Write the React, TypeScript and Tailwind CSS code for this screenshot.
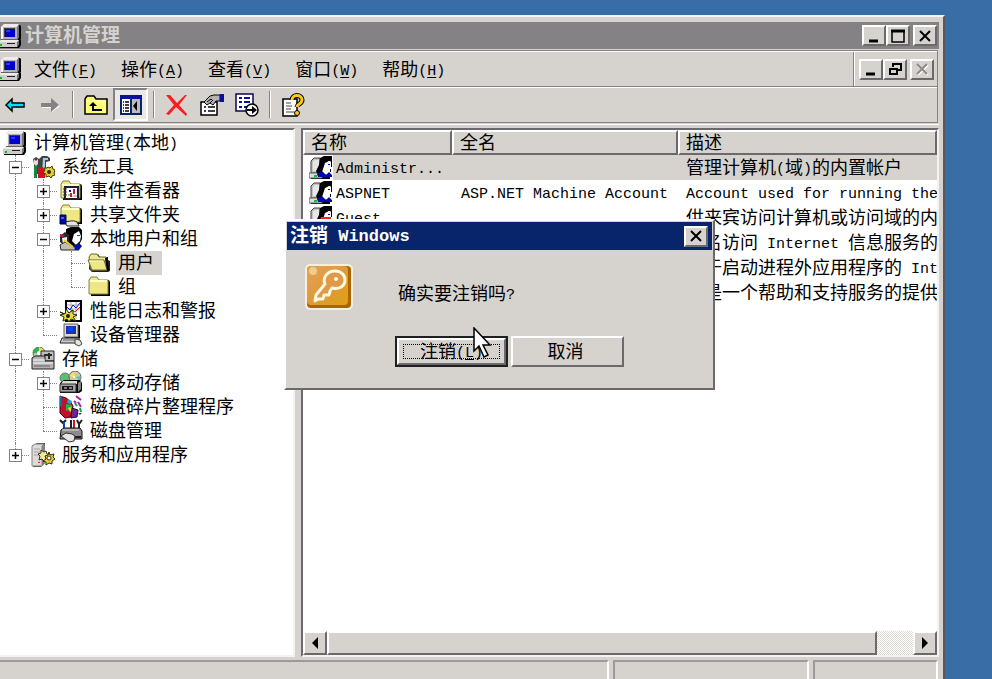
import type { ReactNode } from "react";
import clsx from "clsx";

const raised =
  "bg-[#d6d3ce] border-2 border-t-white border-l-white border-r-[#6b696b] border-b-[#6b696b]";
const sunken =
  "border-2 border-t-[#6b696b] border-l-[#6b696b] border-r-[#f4f3f1] border-b-[#f4f3f1]";

// Chinese glyphs are twice as wide as the Latin ones, so Latin runs get a smaller size
function Mixed({ text, latin = "text-[15px]" }: { text: string; latin?: string }) {
  return (
    <>
      {text.split(/([\x20-\x7e]+)/).map((part, i) =>
        i % 2 ? (
          <span key={i} className={clsx("whitespace-pre align-[1px] leading-none", latin)}>
            {part}
          </span>
        ) : (
          part
        )
      )}
    </>
  );
}

function AccessKey({ label, letter }: { label: string; letter: string }) {
  return (
    <>
      {label}
      <span className="align-[1px] text-[15px] leading-none">
        (<u className="underline-offset-2">{letter}</u>)
      </span>
    </>
  );
}

function Icon({ children, className = "size-6" }: { children: ReactNode; className?: string }) {
  return (
    <svg viewBox="0 0 24 24" className={clsx("shrink-0", className)} aria-hidden="true">
      {children}
    </svg>
  );
}

function Computer({ className }: { className?: string }) {
  return (
    <Icon className={className}>
      <path d="M5 1h17l1 1v13l-2 3H5z" fill="#000" />
      <path d="M3 3l3-3h15v13l-2 3H3z" fill="#b5b2b5" />
      <path d="M3 3l3-3h15l-2 3z" fill="#efebe7" />
      <path d="M3 3h2v12H3z" fill="#f7f7f7" />
      <path d="M19 3l2-3v13l-2 3z" fill="#737173" />
      <path d="M6 4h11v9H6z" fill="#424142" />
      <path d="M7 5h10v8H7z" fill="#0000ce" />
      <path d="M8 6h4v2H8z" fill="#2139ff" />
      <path d="M3 15h16v1H3z" fill="#636163" />
      <path d="M1 18l3-2h19v5l-2 3H1z" fill="#000" />
      <path d="M0 18l3-2h18v4l-2 3H0z" fill="#cecbce" />
      <path d="M0 18l3-2h18l-2 2z" fill="#efebe7" />
      <path d="M19 18l2-2v4l-2 3z" fill="#737173" />
      <path d="M2 20h2v2H2z" fill="#00c300" />
      <path d="M9 19h8v1H9z" fill="#212021" />
    </Icon>
  );
}

function Folder({ open, children }: { open?: boolean; children?: ReactNode }) {
  return (
    <Icon>
      {open ? (
        <>
          <path d="M3 5l2-2h6l2 3h8v3l2 1v10l-2 1H5l-3-3z" fill="#212021" />
          <path d="M2 6l2-3h6l2 3h7v13H4z" fill="#efe794" stroke="#6b6931" />
          <path d="M1 9h16l3 10H5z" fill="#efe784" stroke="#6b6931" />
          <path d="M2 10h14" stroke="#ffffce" />
          <path d="M19 7l2 12" stroke="#000" strokeWidth="2" />
        </>
      ) : (
        <>
          <path d="M3 5h19l1 2v14H4z" fill="#000" />
          <path d="M2 5l2-3h6l2 3h9v14H2z" fill="#efe784" stroke="#848242" />
          <path d="M3 6h17" stroke="#ffffce" strokeWidth="2" />
        </>
      )}
      {children}
    </Icon>
  );
}

function UserIcon({ guest }: { guest?: boolean }) {
  return (
    <Icon>
      <path d="M2 5l3-3h6v15H2z" fill="#c6c3c6" stroke="#424142" />
      <path d="M4 6l2-2h4v11H4z" fill="#e7e7e7" />
      <path d="M1 18h20v5H2z" fill="#000" />
      <path d="M0 17h13v5H0z" fill="#dedbde" stroke="#636163" />
      <path d="M5 19h3v2H5z" fill="#00c339" />
      <path d="M11 2l4-2h8v6l-3-1-3 3-2 7-6 4-2-4 3-6z" fill="#000" />
      <path d="M16 7l4-2 2 1v4l1 2-2 1v3l-4 3-4-3z" fill="#fff" />
      <path d="M22 5h1v6h-1zM21 13h1v3h-1z" fill="#000" />
      <path d="M19 8h2v1h-2z" fill="#0000ff" />
      <path d="M8 18l5-3 4 4 3-3 3 3v2H9z" fill="#0008ad" />
      {guest && <path d="M12 11h10v3H11z" fill="#ff2021" />}
    </Icon>
  );
}

function SystemToolsIcon() {
  return (
    <Icon>
      <path d="M2 4l3-2 3 2 3-3h5l3 2v3l-4 1v6l-4 6H3V9z" fill="#424142" />
      <path d="M3 4l2 2 2-2v5l-2 2-2-2z" fill="#dedfde" />
      <path d="M12 3h5v2h-3v12h-3z" fill="#a5cbde" />
      <path d="M3 11h3v12H3z" fill="#108a42" />
      <path d="M7 12h5l2 4v7H7z" fill="#ce1029" />
      <path d="M17 12l2 1 2-2 1 3 2 1-1 3 1 2-3 1-1 2-2-2-3 1v-3l-3-1 2-3-1-2h3z" fill="#e7cb31" stroke="#423900" />
      <circle cx="18" cy="17" r="2" fill="#313010" />
    </Icon>
  );
}

function EventViewerIcon() {
  return (
    <Folder>
      <path d="M6 8h13v12H6z" fill="#fff" stroke="#212021" strokeWidth="2" />
      <path d="M4 10h4M4 13h4M4 16h4" stroke="#424142" />
      <path d="M10 11h2v2h-2z" fill="#0000ff" />
      <path d="M15 10v5M12 14v4" stroke="#e71021" strokeWidth="2" />
      <path d="M9 16h2M14 17h4" stroke="#848284" />
    </Folder>
  );
}

function SharedFolderIcon() {
  return (
    <Folder>
      <path d="M5 18c3 2 8-2 13 1l2 4H8z" fill="#e7e3de" stroke="#212021" />
      <path d="M1 12h6v9H1z" fill="#0008a5" stroke="#000842" />
      <path d="M2 14h3v2H2z" fill="#2965ff" />
    </Folder>
  );
}

function LocalUsersIcon() {
  return (
    <Icon>
      <path d="M7 2l5-2h8l3 3v9l-3 6-7 3-6-7z" fill="#000" />
      <path d="M15 7l5-3 2 5-1 5-4 4-4-4z" fill="#fff" />
      <path d="M18 8h3v1h-3z" fill="#0059a5" />
      <path d="M1 9l5-4 4 3v8l-4 3-5-4z" fill="#292829" />
      <path d="M3 11l5-1v6l-4 1z" fill="#f7f3ef" />
      <path d="M1 7l5 1-2 2H1z" fill="#ad184a" />
      <path d="M1 18l5-3 8 5 3-2 3 5H2z" fill="#c6bead" stroke="#292829" />
      <path d="M5 13l9 7" stroke="#e7cb31" strokeWidth="2" />
      <path d="M15 19l5-3 3 3-3 4h-4z" fill="#0010a5" />
    </Icon>
  );
}

function PerformanceIcon() {
  return (
    <Icon>
      <path d="M7 2h15v20H7z" fill="#fff" stroke="#000" strokeWidth="2" />
      <path d="M8 6h13M8 10h13M12 3v17M17 3v17" stroke="#adaead" />
      <path d="M8 8l3 3 3-5 3 3 4-5" fill="none" stroke="#0010ce" />
      <path d="M9 15l4-4 3 2 5-5" fill="none" stroke="#de1021" />
      <path
        d="M1 13l5 2 1-5 3 4 4-3v4l4 1-4 2 3 4-5-2-2 3-2-3-4 2 1-4-4-2 4-1z"
        fill="#e7db42"
        stroke="#292800"
      />
      <circle cx="9" cy="17" r="2" fill="#212010" />
    </Icon>
  );
}

function DeviceManagerIcon() {
  return (
    <Icon>
      <path d="M6 2h15v13H6z" fill="#000" />
      <path d="M5 1h14v13H5z" fill="#ded7ce" stroke="#636163" />
      <path d="M7 3h10v8H7z" fill="#2130a5" />
      <path d="M9 4h5v4H9z" fill="#0049ff" />
      <path d="M3 15h17l1 5H1z" fill="#ceced6" stroke="#212021" />
      <path d="M4 17h13" stroke="#636163" />
      <path d="M16 16l5 1 2 4-3 2-4-2z" fill="#e7e3de" stroke="#424142" />
    </Icon>
  );
}

function StorageIcon() {
  return (
    <Icon>
      <circle cx="8" cy="6" r="6" fill="#bdcb9c" stroke="#636163" />
      <path d="M8 0v6H2a6 6 0 0 1 6-6z" fill="#29b352" />
      <path d="M8 6V0l5 3z" fill="#f7db4a" />
      <circle cx="8" cy="6" r="2" fill="#fff" />
      <path d="M10 4h13v10H10z" fill="#bdbebd" stroke="#292829" />
      <path d="M13 8h8M18 6v6" stroke="#292829" strokeWidth="2" />
      <path d="M1 11l3-2h10v5h9v8H1z" fill="#b5b2b5" stroke="#212021" />
      <path d="M2 13h12M2 16h20" stroke="#fff" />
      <path d="M3 19h16" stroke="#636163" />
    </Icon>
  );
}

function RemovableStorageIcon() {
  return (
    <Icon>
      <circle cx="6" cy="7" r="5" fill="#5abe73" stroke="#737573" />
      <circle cx="16" cy="6" r="6" fill="#cecb9c" stroke="#636163" />
      <path d="M10 5l5-4 1 5z" fill="#f7e75a" />
      <path d="M17 6l5-1-2 5z" fill="#5abece" />
      <circle cx="15" cy="6" r="1" fill="#fff" />
      <path d="M5 9h16l2 3v8l-3 2H1V12z" fill="#000" />
      <path d="M4 10h14v3H2z" fill="#dedbde" />
      <path d="M1 13h16v8H1z" fill="#a5a2a5" stroke="#313031" />
      <path d="M19 12l3-2v8l-3 3z" fill="#848284" />
      <path d="M3 15h11v4H3z" fill="#181818" />
      <path d="M5 17h3M10 17h3" stroke="#e7e7e7" />
    </Icon>
  );
}

function DefragIcon() {
  return (
    <Icon>
      <path d="M1 1l6 2 4 3 3 5-2 11-6 1-5-5z" fill="#c6102a" stroke="#4a0010" />
      <path d="M2 1v10" stroke="#0071b5" strokeWidth="2" />
      <path d="M9 4l4 2-1 3-4-1z" fill="#21a2d6" />
      <path d="M7 9l6 1v5l-6 1z" fill="#21b24a" />
      <path d="M9 13l3-1 2 3-3 2z" fill="#f7d321" />
      <path d="M13 13l6 2-1 7-6 1z" fill="#6b2894" stroke="#210839" />
      <path d="M17 1l5 4M15 6l2 2M19 7l3 5" stroke="#9c28ad" strokeWidth="2" />
      <path d="M16 8l2 3M21 13l1 4" stroke="#10a24a" strokeWidth="2" />
      <path d="M19 18h4l-2 2z" fill="#424142" />
    </Icon>
  );
}

function DiskManagementIcon() {
  return (
    <Icon>
      <path d="M1 1l3 3 3-3M12 1v9M18 1l2 4 3-4M20 4v6" fill="none" stroke="#212021" strokeWidth="2" />
      <path d="M5 3v8" stroke="#104ab5" strokeWidth="2" />
      <path d="M15 1v9" stroke="#ce1021" strokeWidth="2" />
      <path d="M2 11l3-2h16l2 3v8H1z" fill="#8c8a8c" stroke="#101010" />
      <path d="M3 11h17" stroke="#dedbde" />
      <path d="M2 17l5-3 6 1 3 2-1 5-5 1z" fill="#e7e3de" stroke="#313031" />
      <path d="M16 17h6v2h-6z" fill="#212021" />
    </Icon>
  );
}

function ServicesIcon() {
  return (
    <Icon>
      <path d="M2 3l4-3h8v20l-4 4H2z" fill="#424142" />
      <path d="M1 3l3-2h9l-2 2v20H1z" fill="#dedbd6" stroke="#848284" />
      <path d="M11 3l3-2v19l-3 3z" fill="#848284" />
      <path d="M3 6h6M3 9h6M3 12h6" stroke="#a5a2a5" />
      <path d="M7 19h2v1H7z" fill="#f71021" />
      <path d="M10 7l3 2 2-1 1 3 3 1-2 2 1 3-3-1-2 3-2-3-3 1 1-4-2-2 3-1z" fill="#efe7a5" stroke="#313010" />
      <path d="M18 9l1 3 4-1-1 3 2 2-3 2v3l-3-1-3 2v-3l-3-1 3-2-1-3 3-1z" fill="#e7cb31" stroke="#313010" />
      <circle cx="18" cy="15" r="2" fill="#fff" stroke="#313010" />
    </Icon>
  );
}

// One guide character per level: "|" passes through, "t" and "l" are branch joints,
// "+" and "-" are expanders, "*" is the last closed expander of its level
const tree: { guides: string; label: string; icon: ReactNode; selected?: boolean }[] = [
  { guides: "", label: "计算机管理(本地)", icon: <Computer className="size-6" /> },
  { guides: "-", label: "系统工具", icon: <SystemToolsIcon /> },
  { guides: "|+", label: "事件查看器", icon: <EventViewerIcon /> },
  { guides: "|+", label: "共享文件夹", icon: <SharedFolderIcon /> },
  { guides: "|-", label: "本地用户和组", icon: <LocalUsersIcon /> },
  { guides: "||t", label: "用户", icon: <Folder open />, selected: true },
  { guides: "||l", label: "组", icon: <Folder /> },
  { guides: "|+", label: "性能日志和警报", icon: <PerformanceIcon /> },
  { guides: "|l", label: "设备管理器", icon: <DeviceManagerIcon /> },
  { guides: "-", label: "存储", icon: <StorageIcon /> },
  { guides: "|+", label: "可移动存储", icon: <RemovableStorageIcon /> },
  { guides: "|t", label: "磁盘碎片整理程序", icon: <DefragIcon /> },
  { guides: "|l", label: "磁盘管理", icon: <DiskManagementIcon /> },
  { guides: "*", label: "服务和应用程序", icon: <ServicesIcon /> },
];

const users = [
  { name: "Administr...", fullName: "", description: "管理计算机(域)的内置帐户", selected: true },
  { name: "ASPNET", fullName: "ASP.NET Machine Account", description: "Account used for running the" },
  { name: "Guest", fullName: "", description: "供来宾访问计算机或访问域的内", guest: true },
  { name: "", fullName: "", description: "匿名访问 Internet 信息服务的" },
  { name: "", fullName: "", description: "用于启动进程外应用程序的 Int" },
  { name: "", fullName: "", description: "这是一个帮助和支持服务的提供" },
];

const menus = [
  ["文件", "F"],
  ["操作", "A"],
  ["查看", "V"],
  ["窗口", "W"],
  ["帮助", "H"],
];

function Guide({ kind }: { kind: string }) {
  const last = kind === "l" || kind === "*";
  const box = kind === "+" || kind === "-" || kind === "*";
  return (
    <span className="relative flex h-6 w-7 shrink-0 items-center justify-center">
      <span
        className={clsx(
          "absolute left-[14px] top-0 border-l border-dotted border-[#848284]",
          last ? "h-3" : "h-6"
        )}
      />
      {kind !== "|" && (
        <span className="absolute left-[14px] right-0 top-3 border-t border-dotted border-[#848284]" />
      )}
      {box && (
        <button
          aria-label={kind === "-" ? "折叠" : "展开"}
          className="relative flex size-[13px] items-center justify-center border border-[#848284] bg-white"
        >
          <svg viewBox="0 0 9 9" className="size-[9px]" stroke="#000" strokeWidth="1.5">
            <path d={kind === "-" ? "M1 4.5h7" : "M1 4.5h7M4.5 1v7"} />
          </svg>
        </button>
      )}
    </span>
  );
}

function CaptionButton({ kind, disabled }: { kind: "min" | "max" | "restore" | "close"; disabled?: boolean }) {
  return (
    <button
      aria-label={kind}
      disabled={disabled}
      className={clsx("flex h-[21px] w-6 items-center justify-center", raised)}
    >
      <svg viewBox="0 0 16 16" className="size-4" fill="none" stroke="#000" strokeWidth="2">
        {kind === "min" && <path d="M3 13h9" strokeWidth="3" />}
        {kind === "max" && (
          <>
            <path d="M1 3h14" strokeWidth="3" />
            <path d="M2 3v11h12V3" strokeWidth="1.5" />
          </>
        )}
        {kind === "restore" && <path d="M6 3h8M6 2v4M14 2v7h-4M2 8h8M3 7v6h7V7" />}
        {kind === "close" && disabled && <path d="M4 4l10 10M14 4l-10 10" stroke="#fff" />}
        {kind === "close" && <path d="M3 3l10 10M13 3l-10 10" stroke={disabled ? "#8c8a8c" : "#000"} />}
      </svg>
    </button>
  );
}

function ToolButton({ label, active, children }: { label: string; active?: boolean; children: ReactNode }) {
  return (
    <button
      aria-label={label}
      className={clsx(
        "flex h-[33px] w-[35px] shrink-0 items-center justify-center",
        active && "border-2 border-t-[#848284] border-l-[#848284] border-r-white border-b-white bg-[#ebe9e6]"
      )}
    >
      {children}
    </button>
  );
}

function Separator() {
  return (
    <span className="flex w-[11px] shrink-0 justify-center">
      <span className="h-[27px] w-[2px] border-l border-r border-l-[#848284] border-r-white" />
    </span>
  );
}

function Toolbar() {
  return (
    <div className="-ml-[3px] flex items-center">
      <ToolButton label="后退">
        <Icon>
          <path d="M3 12l6-6v4h12v4H9v4z" fill="#00dff7" stroke="#000" strokeWidth="1.5" />
        </Icon>
      </ToolButton>
      <ToolButton label="前进">
        <Icon>
          <path d="M4 11h10V7l8 6-8 6v-4H4z" fill="#fff" />
          <path d="M3 10h10V5l8 7-8 7v-5H3z" fill="#848284" />
        </Icon>
      </ToolButton>
      <Separator />
      <ToolButton label="向上">
        <Icon>
          <path d="M1 6l2-3h7l2 3h11v15H1z" fill="#ffff73" stroke="#000" strokeWidth="1.5" />
          <path d="M2 8h20" stroke="#ffffd6" />
          <path d="M9 9l-4 4h3v5h10v-2h-8v-3h3z" fill="#000" />
        </Icon>
      </ToolButton>
      <ToolButton label="显示控制台树" active>
        <Icon>
          <path d="M2 3h20v18H2z" fill="#fff" stroke="#08246b" strokeWidth="2" />
          <path d="M1 2h22v4H1z" fill="#08109c" />
          <path d="M12 6h9v14h-9z" fill="#bdbabd" />
          <path d="M12 5v16" stroke="#08246b" strokeWidth="2" />
          <path d="M4 9h6M4 12h6M4 15h6M4 18h6" stroke="#000" strokeWidth="1.5" strokeDasharray="1 1 4" />
          <path d="M18 8v10l-4-5z" fill="#000" />
        </Icon>
      </ToolButton>
      <Separator />
      <ToolButton label="删除">
        <Icon>
          <path d="M1 2h4l7 8 8-8h2l-8 10 8 9-1 2-10-9-7 8-3-1 8-9z" fill="#ff1c21" />
        </Icon>
      </ToolButton>
      <ToolButton label="属性">
        <Icon>
          <path d="M1 9h16v13H1z" fill="#fff" stroke="#000" strokeWidth="1.5" />
          <path d="M4 14h2M8 14h7M4 18h2M8 18h7" stroke="#000" strokeWidth="1.5" />
          <path d="M4 9l6-6 4-1h6v6h-4l-3 4-3-2-3 2z" fill="#b5b2b5" stroke="#000" />
          <path d="M7 9l4-3 2 2M10 10l3-3" fill="none" stroke="#000" />
          <path d="M20 1h4v8h-4z" fill="#08109c" />
        </Icon>
      </ToolButton>
      <ToolButton label="导出列表">
        <Icon>
          <path d="M1 1h17v17H1z" fill="#fff" stroke="#08084a" strokeWidth="1.5" />
          <path d="M4 5h3M9 5h6M4 9h3M9 9h6M4 14h3M9 14h3" stroke="#08109c" strokeWidth="2" />
          <circle cx="17" cy="17" r="6" fill="#fff" stroke="#000" strokeWidth="1.5" />
          <path d="M12 16h5v-3l5 4-5 4v-3h-5z" fill="#000" />
        </Icon>
      </ToolButton>
      <Separator />
      <ToolButton label="帮助">
        <Icon>
          <path d="M2 6h14v17H2z" fill="#fff" stroke="#000" strokeWidth="1.5" />
          <path d="M5 10h5M5 13h6M5 16h5M5 19h8" stroke="#848284" strokeWidth="1.5" />
          <path d="M11 7c0-6 10-6 10 0 0 4-5 4-5 7" fill="none" stroke="#000" strokeWidth="5" />
          <path d="M11 7c0-6 10-6 10 0 0 4-5 4-5 7" fill="none" stroke="#ffcb10" strokeWidth="3" />
          <circle cx="16" cy="20" r="2.5" fill="#ffcb10" stroke="#000" />
        </Icon>
      </ToolButton>
    </div>
  );
}

function ConsoleTree() {
  return (
    <nav className={clsx("w-[295px] shrink-0 border-l-0 bg-white pt-px", sunken)}>
      {tree.map((node) => (
        <div key={node.label} className="flex h-6 items-center pl-px">
          {node.guides.split("").map((kind, i) => (
            <Guide key={i} kind={kind} />
          ))}
          <span className="flex w-[31px] shrink-0 pl-[2px]">{node.icon}</span>
          <span
            className={clsx(
              "flex h-6 items-center whitespace-nowrap pl-[2px] pr-2 pt-[2px]",
              node.selected && "bg-[#d6d3ce]"
            )}
          >
            <span>
              <Mixed text={node.label} />
            </span>
          </span>
        </div>
      ))}
    </nav>
  );
}

function UserList() {
  return (
    <section className={clsx("flex min-w-0 flex-1 flex-col bg-white", sunken)}>
      <div className="min-h-0 flex-1 overflow-hidden">
        <table className="w-full table-fixed border-collapse text-left">
          <colgroup>
            <col className="w-[149px]" />
            <col className="w-[226px]" />
            <col />
          </colgroup>
          <thead>
            <tr>
              {["名称", "全名", "描述"].map((title) => (
                <th key={title} className="p-0 font-normal">
                  <div className={clsx("flex h-[25px] items-center pl-[6px] pt-[2px]", raised)}>{title}</div>
                </th>
              ))}
            </tr>
          </thead>
          <tbody>
            {users.map((user) => {
              const fill = user.selected && "bg-[#d6d3ce]";
              return (
                <tr key={user.description} className="whitespace-nowrap">
                  <td className="p-0">
                    <div className="flex h-[25px] items-center pl-[6px]">
                      <UserIcon guest={user.guest} />
                      <span className={clsx("h-full flex-1 pl-[3px] pt-[2px]", fill)}>
                        <Mixed text={user.name} />
                      </span>
                    </div>
                  </td>
                  <td className={clsx("p-0", fill)}>
                    <div className="h-[25px] pl-[9px] pt-[2px]">
                      <Mixed text={user.fullName} />
                    </div>
                  </td>
                  <td className={clsx("overflow-hidden p-0", fill)}>
                    <div className="h-[25px] pl-2 pt-[2px]">
                      <Mixed text={user.description} />
                    </div>
                  </td>
                </tr>
              );
            })}
          </tbody>
        </table>
      </div>
      <div className="flex h-6 bg-[repeating-conic-gradient(#fff_0_25%,#dedbd6_0_50%)] bg-[length:2px_2px]">
        <button aria-label="向左滚动" className={clsx("flex w-6 items-center justify-center", raised)}>
          <svg viewBox="0 0 8 12" className="h-3 w-2">
            <path d="M7 0v12L1 6z" />
          </svg>
        </button>
        <div className={clsx("flex-1", raised)} />
        <div className="w-9" />
        <button aria-label="向右滚动" className={clsx("flex w-6 items-center justify-center", raised)}>
          <svg viewBox="0 0 8 12" className="h-3 w-2">
            <path d="M1 0v12l6-6z" />
          </svg>
        </button>
      </div>
    </section>
  );
}

function LogoffDialog() {
  return (
    <div
      role="dialog"
      aria-label="注销 Windows"
      className={clsx("absolute left-[284px] top-[219px] h-[171px] w-[431px] p-px", raised)}
    >
      <div className="flex h-7 items-center justify-between bg-[#08246b] pl-[3px] pr-1 text-[19px] font-bold text-white">
        <span className="pt-[2px]">
          <Mixed text="注销 Windows" latin="text-[17px]" />
        </span>
        <CaptionButton kind="close" />
      </div>
      <div className="flex items-center pl-[18px] pt-[13px]">
        <svg viewBox="0 0 48 48" className="size-12" aria-hidden="true">
          <defs>
            <linearGradient id="key-tile" x1="0" y1="0" x2="1" y2="1">
              <stop offset="0" stopColor="#e7a25a" />
              <stop offset="0.5" stopColor="#de9a39" />
              <stop offset="1" stopColor="#dea210" />
            </linearGradient>
          </defs>
          <rect x="0" y="1" width="48" height="46" rx="5" fill="#f7efe0" />
          <rect x="2" y="3" width="44" height="42" rx="4" fill="#ad6500" />
          <rect x="2" y="3" width="41" height="39" rx="4" fill="url(#key-tile)" />
          <circle cx="8" cy="8" r="4" fill="#efce8c" />
          <path
            d="M20 21c-3-7 3-13 10-13 6 0 10 4 10 9 0 6-6 10-13 8l-2 3-1 4-5 0-1 4-5 0-3 2 1-6z"
            fill="#de9a4a"
            stroke="#fff7de"
            strokeWidth="3"
            strokeLinejoin="round"
          />
          <circle cx="31" cy="16" r="2" fill="#fff7de" />
        </svg>
        <p className="pl-[45px] pt-4">
          <Mixed text="确实要注销吗?" />
        </p>
      </div>
      <div className="flex gap-[3px] pl-[108px] pt-[25px]">
        <button className="h-[31px] w-[113px] border-2 border-[#212021]">
          <span className={clsx("flex h-full p-1", raised)}>
            <span className="flex flex-1 items-center justify-center border border-dotted border-black">
              <span className="pt-[2px]">
                <AccessKey label="注销" letter="L" />
              </span>
            </span>
          </span>
        </button>
        <button className={clsx("h-[31px] w-[113px] pr-1 pt-[2px]", raised)}>取消</button>
      </div>
    </div>
  );
}

export default function App() {
  return (
    <div className="relative flex h-screen flex-col overflow-hidden bg-[#396da5] pr-[47px] pt-[15px] font-['Liberation_Mono','Noto_Sans_CJK_SC',monospace] text-[18px] leading-6 text-black">
      <main className="flex min-h-0 flex-1 flex-col border-r-2 border-t-2 border-r-[#5a595a] border-t-[#f4f3f1] bg-[#d6d3ce] pr-1 pt-[5px]">
        <header className="flex h-[27px] shrink-0 items-center bg-[#848284] pr-[2px] text-[19px] font-bold text-[#d6d3ce]">
          <Computer className="-ml-[2px] size-6" />
          <h1 className="flex-1 pl-[3px] pt-[2px]">计算机管理</h1>
          <CaptionButton kind="min" />
          <CaptionButton kind="max" />
          <span className="w-[3px]" />
          <CaptionButton kind="close" />
        </header>

        <div className="mr-px mt-px shrink-0 border-r border-t border-[#848284]">
          <div className="flex h-9 border-b border-t border-b-[#848284] border-t-white">
            <div className="flex flex-1 items-center border-r border-[#848284]">
              <Computer className="-ml-[2px] size-6" />
              <div className="flex gap-6 pl-3 pt-1">
                {menus.map(([label, letter]) => (
                  <button key={label} className="whitespace-nowrap">
                    <AccessKey label={label} letter={letter} />
                  </button>
                ))}
              </div>
            </div>
            <div className="flex items-center border-l border-white pl-1 pr-[3px]">
              <CaptionButton kind="min" />
              <CaptionButton kind="restore" />
              <span className="w-[3px]" />
              <CaptionButton kind="close" disabled />
            </div>
          </div>
          <div className="h-9 border-b border-t border-b-[#848284] border-t-white">
            <Toolbar />
          </div>
        </div>

        <div className="mt-px flex min-h-0 flex-1 gap-[6px] border-t border-white pt-[3px]">
          <ConsoleTree />
          <UserList />
        </div>

        <footer className="mr-px mt-[3px] flex h-[19px] shrink-0 gap-1">
          <div className="flex-1 border-r-2 border-t-2 border-r-white border-t-[#9c9a9c]" />
          <div className="w-[196px] border-2 border-b-0 border-l-[#9c9a9c] border-r-white border-t-[#9c9a9c]" />
          <div className="w-[125px] border-2 border-b-0 border-l-[#9c9a9c] border-r-white border-t-[#9c9a9c]" />
        </footer>
      </main>

      <LogoffDialog />

      <svg viewBox="0 0 20 32" className="absolute left-[473px] top-[327px] h-8 w-5" aria-hidden="true">
        <path d="M1 1v23l5-5 5 11 4-2-5-10h7z" fill="#fff" stroke="#000" strokeWidth="1.5" />
      </svg>
    </div>
  );
}
